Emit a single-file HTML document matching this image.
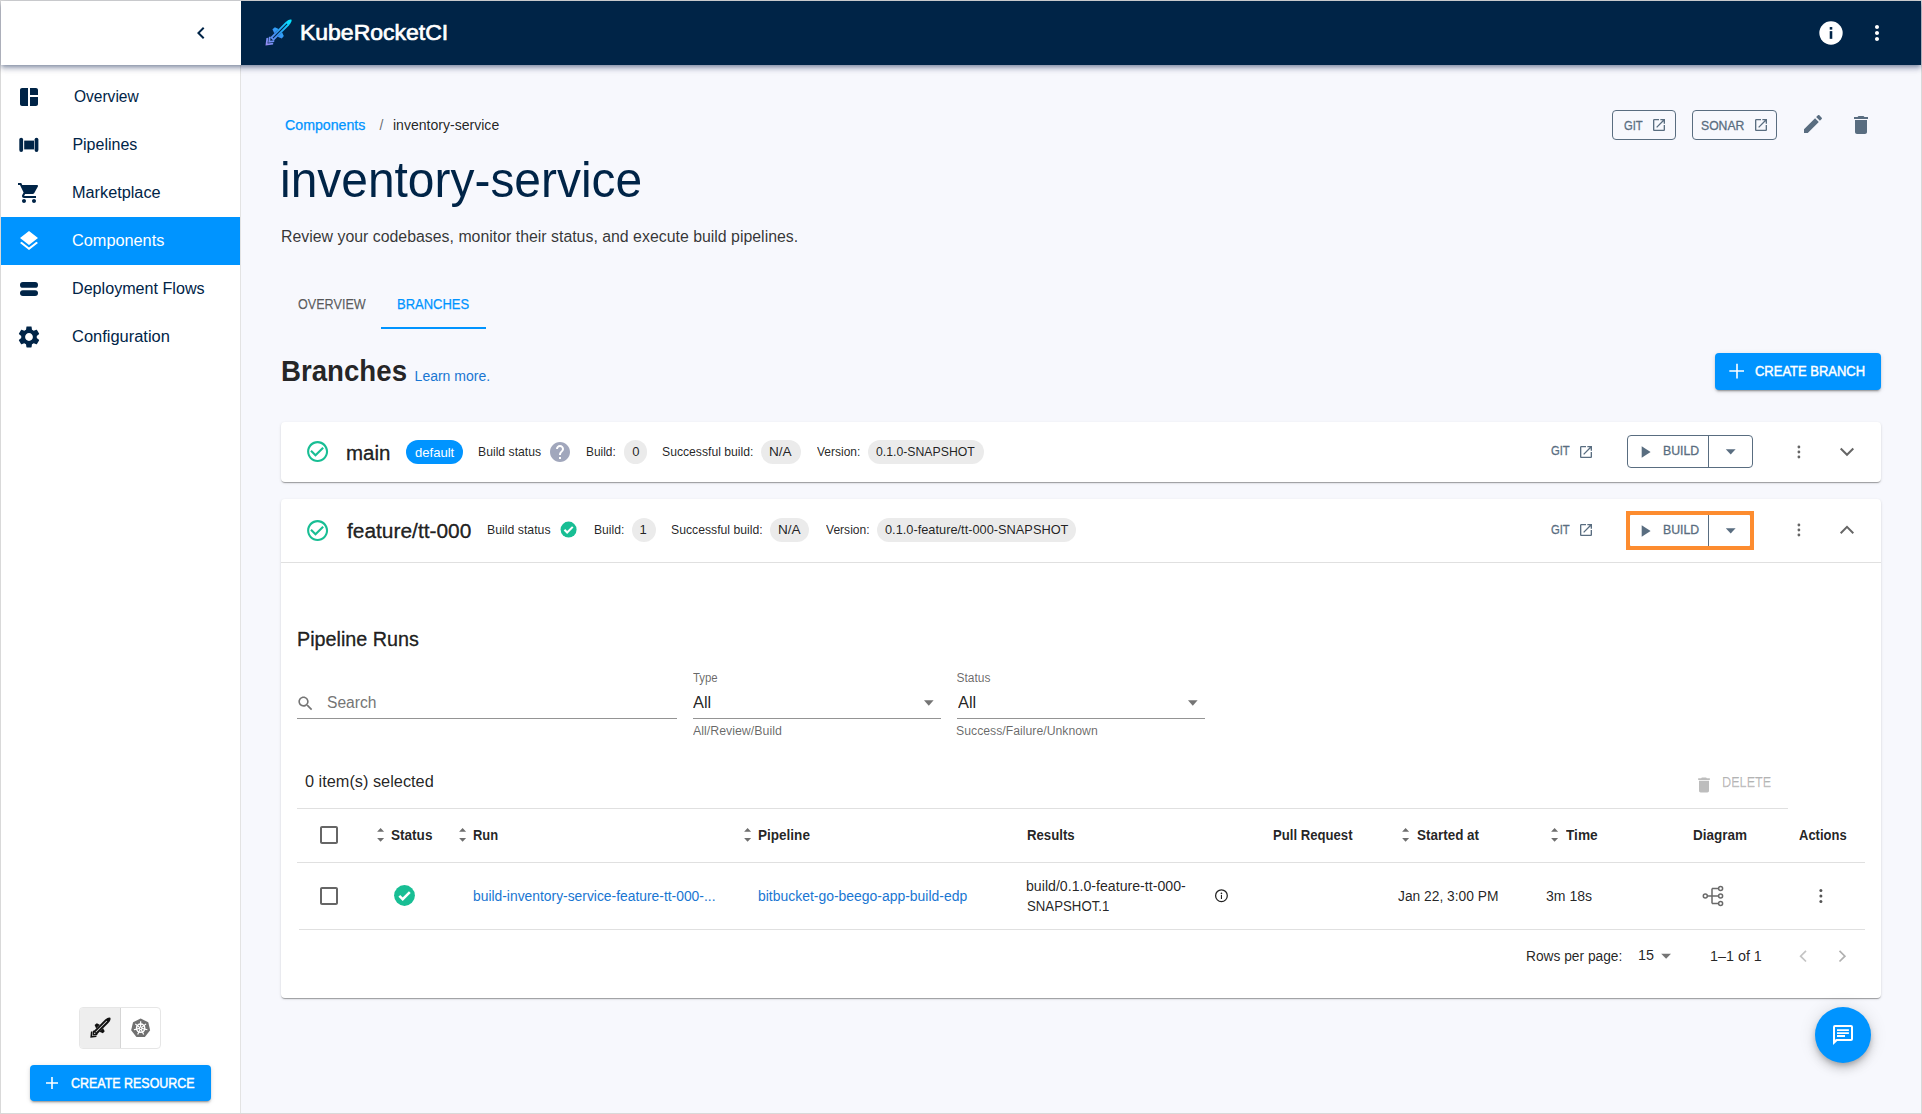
<!DOCTYPE html>
<html><head><meta charset="utf-8"><style>
html,body{margin:0;padding:0}
body{width:1922px;height:1114px;overflow:hidden;background:#d9d9d9;position:relative;font-family:"Liberation Sans",sans-serif}
.bx{position:absolute;box-sizing:content-box}
.a{position:absolute;overflow:visible}
.t{position:absolute;line-height:1;white-space:nowrap;z-index:3;transform-origin:0 0}
</style></head><body>
<div class="bx" style="left:1px;top:1px;width:1920px;height:1112px;background:#f7f8fd"></div>
<div class="bx" style="left:1px;top:1px;width:239px;height:1112px;background:#fff;border-right:1px solid #e3e3e3"></div>
<div class="bx" style="left:1px;top:217px;width:239px;height:48px;background:#0094ff"></div>
<div class="bx" style="left:1px;top:1px;width:1920px;height:64px;background:#fff;box-shadow:0 2px 4px -1px rgba(0,25,70,.32),0 4px 5px 0 rgba(0,25,70,.2),0 1px 10px 0 rgba(0,25,70,.14);z-index:2"></div>
<div class="bx" style="left:241px;top:1px;width:1680px;height:64px;background:#002447;z-index:2"></div>
<svg class="a" style="z-index:3;left:189px;top:21px" width="24" height="24" viewBox="0 0 24 24"><path fill="#002447" d="M15.41 7.41L14 6l-6 6 6 6 1.41-1.41L10.83 12z"/></svg>
<svg class="a" style="left:17px;top:85px" width="24" height="24" viewBox="0 0 24 24"><path fill="#002447" d="M11 21H5c-1.1 0-2-.9-2-2V5c0-1.1.9-2 2-2h6v18zm2 0h6c1.1 0 2-.9 2-2v-7h-8v9zm8-11V5c0-1.1-.9-2-2-2h-6v7h8z"/></svg>
<svg class="a" style="left:17px;top:133px" width="24" height="24" viewBox="0 0 24 24"><rect x="2.3" y="4.7" width="3.8" height="14.2" rx="1.9" fill="#002447"/><rect x="7.2" y="7.6" width="9.8" height="8.8" fill="#002447"/><rect x="17.6" y="4.7" width="3.8" height="14.2" rx="1.9" fill="#002447"/></svg>
<svg class="a" style="left:17px;top:181px" width="24" height="24" viewBox="0 0 24 24"><path fill="#002447" d="M7 18c-1.1 0-1.99.9-1.99 2S5.9 22 7 22s2-.9 2-2-.9-2-2-2zM1 2v2h2l3.6 7.59-1.35 2.45c-.16.28-.25.61-.25.96 0 1.1.9 2 2 2h12v-2H7.42c-.14 0-.25-.11-.25-.25l.03-.12.9-1.63h7.45c.75 0 1.41-.41 1.75-1.03l3.58-6.49c.08-.14.12-.31.12-.48 0-.55-.45-1-1-1H5.21l-.94-2H1zm16 16c-1.1 0-1.99.9-1.99 2s.89 2 1.99 2 2-.9 2-2-.9-2-2-2z"/></svg>
<svg class="a" style="left:17px;top:229px" width="24" height="24" viewBox="0 0 24 24"><path fill="#fff" d="M11.99 18.54l-7.37-5.73L3 14.07l9 7 9-7-1.63-1.27-7.38 5.74zM12 16l7.36-5.73L21 9l-9-7-9 7 1.63 1.27L12 16z"/></svg>
<svg class="a" style="left:17px;top:277px" width="24" height="24" viewBox="0 0 24 24"><rect x="3" y="5" width="18" height="5.8" rx="2.9" fill="#002447"/><rect x="3" y="13.2" width="18" height="5.8" rx="2.9" fill="#002447"/></svg>
<svg class="a" style="left:16px;top:324px" width="26" height="26" viewBox="0 0 24 24"><path fill="#002447" d="M19.14 12.94c.04-.3.06-.61.06-.94 0-.32-.02-.64-.07-.94l2.03-1.58c.18-.14.23-.41.12-.61l-1.92-3.32c-.12-.22-.37-.29-.59-.22l-2.39.96c-.5-.38-1.03-.7-1.62-.94l-.36-2.54c-.04-.24-.24-.41-.48-.41h-3.84c-.24 0-.43.17-.47.41l-.36 2.54c-.59.24-1.13.57-1.62.94l-2.39-.96c-.22-.08-.47 0-.59.22L2.74 8.87c-.12.21-.08.47.12.61l2.03 1.58c-.05.3-.09.63-.09.94s.02.64.07.94l-2.03 1.58c-.18.14-.23.41-.12.61l1.92 3.32c.12.22.37.29.59.22l2.39-.96c.5.38 1.03.7 1.62.94l.36 2.54c.05.24.24.41.48.41h3.84c.24 0 .44-.17.47-.41l.36-2.54c.59-.24 1.13-.56 1.62-.94l2.39.96c.22.08.47 0 .59-.22l1.92-3.32c.12-.22.07-.47-.12-.61l-2.01-1.58zM12 15.6c-1.98 0-3.6-1.62-3.6-3.6s1.62-3.6 3.6-3.6 3.6 1.62 3.6 3.6-1.62 3.6-3.6 3.6z"/></svg>
<svg class="a" style="left:264px;top:19px;z-index:3" width="28" height="28" viewBox="0 0 28 28"><defs><linearGradient id="lg" gradientUnits="userSpaceOnUse" x1="0" y1="0" x2="36" y2="0"><stop offset="0" stop-color="#a08cf2"/><stop offset="0.45" stop-color="#3a93f6"/><stop offset="1" stop-color="#00e8ff"/></linearGradient></defs><g transform="translate(1.5,26.5) rotate(-45)" fill="url(#lg)"><path d="M9,-2.4 L31,-2.4 Q36,-2 36.6,0 Q36,2 31,2.4 L9,2.4 Z"/><path d="M14.8,-2.4 L21,-2.4 L19.6,-6.3 L16.4,-6.6 Z"/><path d="M14.8,2.4 L21,2.4 L19.6,6.3 L16.4,6.6 Z"/><path d="M0,0 L6,-4.7 L7.5,-3.5 L2.9,0 L7.5,3.5 L6,4.7Z"/><path d="M3.9,0 L8.6,-3.7 L9.9,-2.6 L6.7,0 L9.9,2.6 L8.6,3.7Z"/><rect x="10.5" y="-0.55" width="20" height="1.1" fill="#002447"/></g></svg>
<svg class="a" style="left:1817px;top:19px;z-index:3" width="28" height="28" viewBox="0 0 24 24"><circle cx="12" cy="12" r="10" fill="#fff"/><rect x="10.9" y="10.4" width="2.2" height="6.6" fill="#002447"/><rect x="10.9" y="6.9" width="2.2" height="2.2" fill="#002447"/></svg>
<svg class="a" style="left:1865px;top:21px;z-index:3" width="24" height="24" viewBox="0 0 24 24"><path fill="#fff" d="M12 8c1.1 0 2-.9 2-2s-.9-2-2-2-2 .9-2 2 .9 2 2 2zm0 2c-1.1 0-2 .9-2 2s.9 2 2 2 2-.9 2-2-.9-2-2-2zm0 6c-1.1 0-2 .9-2 2s.9 2 2 2 2-.9 2-2-.9-2-2-2z"/></svg>
<div class="bx" style="left:1612px;top:110px;width:62px;height:28px;border:1px solid #596d80;border-radius:4px"></div>
<svg class="a" style="left:1651px;top:117px" width="16" height="16" viewBox="0 0 24 24"><path fill="#596d80" d="M19 19H5V5h7V3H5c-1.11 0-2 .9-2 2v14c0 1.1.89 2 2 2h14c1.1 0 2-.9 2-2v-7h-2v7zM14 3v2h3.59l-9.83 9.83 1.41 1.41L19 6.41V10h2V3h-7z"/></svg>
<div class="bx" style="left:1692px;top:110px;width:83px;height:28px;border:1px solid #596d80;border-radius:4px"></div>
<svg class="a" style="left:1753.3px;top:117px" width="16" height="16" viewBox="0 0 24 24"><path fill="#596d80" d="M19 19H5V5h7V3H5c-1.11 0-2 .9-2 2v14c0 1.1.89 2 2 2h14c1.1 0 2-.9 2-2v-7h-2v7zM14 3v2h3.59l-9.83 9.83 1.41 1.41L19 6.41V10h2V3h-7z"/></svg>
<svg class="a" style="left:1801px;top:112px" width="24" height="24" viewBox="0 0 24 24"><path fill="#596d80" d="M3 17.25V21h3.75L17.81 9.94l-3.75-3.75L3 17.25zM20.71 7.04c.39-.39.39-1.02 0-1.41l-2.34-2.34c-.39-.39-1.02-.39-1.41 0l-1.83 1.83 3.75 3.75 1.83-1.83z"/></svg>
<svg class="a" style="left:1849px;top:113px" width="24" height="24" viewBox="0 0 24 24"><path fill="#596d80" d="M6 19c0 1.1.9 2 2 2h8c1.1 0 2-.9 2-2V7H6v12zM19 4h-3.5l-1-1h-5l-1 1H5v2h14V4z"/></svg>
<div class="bx" style="left:381px;top:327px;width:105px;height:2px;background:#0094ff"></div>
<div class="bx" style="left:1715px;top:353px;width:166px;height:37px;background:#0094ff;border-radius:4px;box-shadow:0 3px 1px -2px rgba(0,0,0,.2),0 2px 2px 0 rgba(0,0,0,.14),0 1px 5px 0 rgba(0,0,0,.12)"></div>
<svg class="a" style="left:1729px;top:363px" width="16" height="16" viewBox="0 0 16 16"><path d="M8 0.7V15.5M0.3 8H15" stroke="#fff" stroke-width="1.6"/></svg>
<div class="bx" style="left:281px;top:422px;width:1600px;height:60px;background:#fff;border-radius:4px;box-shadow:0 2px 1px -1px rgba(0,0,0,.2),0 1px 1px 0 rgba(0,0,0,.14),0 1px 3px 0 rgba(0,0,0,.12)"></div>
<svg class="a" style="left:304.9px;top:438.9px" width="25.2" height="25.2" viewBox="0 0 24 24"><path fill="#18be94" d="M16.59 7.58L10 14.17l-3.59-3.58L5 12l5 5 8-8zM12 2C6.48 2 2 6.48 2 12s4.48 10 10 10 10-4.48 10-10S17.52 2 12 2zm0 18c-4.42 0-8-3.58-8-8s3.58-8 8-8 8 3.58 8 8-3.58 8-8 8z"/></svg>
<div class="bx" style="left:406px;top:440px;width:57px;height:24px;border-radius:12px;background:#0094ff"></div>
<svg class="a" style="left:548px;top:439.7px" width="24" height="24" viewBox="0 0 24 24"><path fill="#a1a7bc" d="M12 2C6.48 2 2 6.48 2 12s4.48 10 10 10 10-4.48 10-10S17.52 2 12 2zm1 17h-2v-2h2v2zm2.07-7.75l-.9.92C13.45 12.9 13 13.5 13 15h-2v-.5c0-1.1.45-2.1 1.17-2.83l1.24-1.26c.37-.36.59-.86.59-1.41 0-1.1-.9-2-2-2s-2 .9-2 2H8c0-2.21 1.79-4 4-4s4 1.79 4 4c0 .88-.36 1.68-.93 2.25z"/></svg>
<div class="bx" style="left:624px;top:440px;width:23px;height:24px;border-radius:12px;background:#ebebeb"></div>
<div class="bx" style="left:761px;top:440px;width:40px;height:24px;border-radius:12px;background:#ebebeb"></div>
<div class="bx" style="left:868px;top:440px;width:116px;height:24px;border-radius:12px;background:#ebebeb"></div>
<svg class="a" style="left:1578px;top:444.0px" width="16" height="16" viewBox="0 0 24 24"><path fill="#596d80" d="M19 19H5V5h7V3H5c-1.11 0-2 .9-2 2v14c0 1.1.89 2 2 2h14c1.1 0 2-.9 2-2v-7h-2v7zM14 3v2h3.59l-9.83 9.83 1.41 1.41L19 6.41V10h2V3h-7z"/></svg>
<div class="bx" style="left:1627px;top:435.0px;width:124px;height:31px;border:1px solid #596d80;border-radius:4px"></div>
<div class="bx" style="left:1708px;top:435.0px;width:1px;height:33px;background:#596d80"></div>
<svg class="a" style="left:1640px;top:444.5px" width="12" height="14" viewBox="0 0 12 14"><path d="M1.7 1.3L10.6 7 1.7 12.7z" fill="#596d80"/></svg>
<svg class="a" style="left:1724px;top:447.5px" width="13" height="8" viewBox="0 0 13 8"><path d="M1.8 1.3h9.8L6.7 6.6z" fill="#596d80"/></svg>
<svg class="a" style="left:1795px;top:443.5px" width="8" height="16" viewBox="0 0 8 16"><circle cx="3.9" cy="3" r="1.4" fill="#666"/><circle cx="3.9" cy="8" r="1.4" fill="#666"/><circle cx="3.9" cy="13" r="1.4" fill="#666"/></svg>
<svg class="a" style="left:1838px;top:445.5px" width="18" height="12" viewBox="0 0 18 12"><path d="M2.7 2.5L9 8.8l6.3-6.3" fill="none" stroke="#666" stroke-width="2"/></svg>
<div class="bx" style="left:281px;top:499px;width:1600px;height:499px;background:#fff;border-radius:4px;box-shadow:0 2px 1px -1px rgba(0,0,0,.2),0 1px 1px 0 rgba(0,0,0,.14),0 1px 3px 0 rgba(0,0,0,.12)"></div>
<div class="bx" style="left:281px;top:562px;width:1600px;height:1px;background:#e0e0e0"></div>
<svg class="a" style="left:304.9px;top:517.8px" width="25.2" height="25.2" viewBox="0 0 24 24"><path fill="#18be94" d="M16.59 7.58L10 14.17l-3.59-3.58L5 12l5 5 8-8zM12 2C6.48 2 2 6.48 2 12s4.48 10 10 10 10-4.48 10-10S17.52 2 12 2zm0 18c-4.42 0-8-3.58-8-8s3.58-8 8-8 8 3.58 8 8-3.58 8-8 8z"/></svg>
<svg class="a" style="left:559.4px;top:520.4px" width="19.2" height="19.2" viewBox="0 0 24 24"><circle cx="12" cy="12" r="10" fill="#18be94"/><path d="M6.8 12.2l3.4 3.4 7-7" fill="none" stroke="#fff" stroke-width="2.6"/></svg>
<div class="bx" style="left:632px;top:518px;width:24px;height:24px;border-radius:12px;background:#ebebeb"></div>
<div class="bx" style="left:770px;top:518px;width:39px;height:24px;border-radius:12px;background:#ebebeb"></div>
<div class="bx" style="left:877px;top:518px;width:199px;height:24px;border-radius:12px;background:#ebebeb"></div>
<svg class="a" style="left:1578px;top:522.1px" width="16" height="16" viewBox="0 0 24 24"><path fill="#596d80" d="M19 19H5V5h7V3H5c-1.11 0-2 .9-2 2v14c0 1.1.89 2 2 2h14c1.1 0 2-.9 2-2v-7h-2v7zM14 3v2h3.59l-9.83 9.83 1.41 1.41L19 6.41V10h2V3h-7z"/></svg>
<div class="bx" style="left:1627px;top:514.0px;width:124px;height:31px;border:1px solid #596d80;border-radius:4px"></div>
<div class="bx" style="left:1708px;top:514.0px;width:1px;height:33px;background:#596d80"></div>
<svg class="a" style="left:1640px;top:523.5px" width="12" height="14" viewBox="0 0 12 14"><path d="M1.7 1.3L10.6 7 1.7 12.7z" fill="#596d80"/></svg>
<svg class="a" style="left:1724px;top:526.5px" width="13" height="8" viewBox="0 0 13 8"><path d="M1.8 1.3h9.8L6.7 6.6z" fill="#596d80"/></svg>
<div class="bx" style="left:1626px;top:511.0px;width:120px;height:31px;border:4px solid #fd8c2f;z-index:4"></div>
<svg class="a" style="left:1795px;top:521.5px" width="8" height="16" viewBox="0 0 8 16"><circle cx="3.9" cy="3" r="1.4" fill="#666"/><circle cx="3.9" cy="8" r="1.4" fill="#666"/><circle cx="3.9" cy="13" r="1.4" fill="#666"/></svg>
<svg class="a" style="left:1838px;top:522.7px" width="18" height="12" viewBox="0 0 18 12"><path d="M2.7 10.2L9 3.9l6.3 6.3" fill="none" stroke="#666" stroke-width="2"/></svg>
<svg class="a" style="left:296.3px;top:693.6px" width="19" height="19" viewBox="0 0 24 24"><path fill="#757575" d="M15.5 14h-.79l-.28-.27C15.41 12.59 16 11.11 16 9.5 16 5.91 13.09 3 9.5 3S3 5.91 3 9.5 5.91 16 9.5 16c1.61 0 3.09-.59 4.23-1.57l.27.28v.79l5 4.99L20.49 19l-4.99-5zm-6 0C7.01 14 5 11.99 5 9.5S7.01 5 9.5 5 14 7.01 14 9.5 11.99 14 9.5 14z"/></svg>
<div class="bx" style="left:297px;top:718px;width:380px;height:1px;background:#949494"></div>
<div class="bx" style="left:693px;top:718px;width:248px;height:1px;background:#949494"></div>
<div class="bx" style="left:957px;top:718px;width:248px;height:1px;background:#949494"></div>
<svg class="a" style="left:923.4px;top:699px" width="12" height="8" viewBox="0 0 12 8"><path d="M1 1.3h9.6L5.8 6.8z" fill="#757575"/></svg>
<svg class="a" style="left:1187.3px;top:699px" width="12" height="8" viewBox="0 0 12 8"><path d="M1 1.3h9.6L5.8 6.8z" fill="#757575"/></svg>
<svg class="a" style="left:1694px;top:775px" width="20" height="20" viewBox="0 0 24 24"><path fill="rgba(0,0,0,0.26)" d="M6 19c0 1.1.9 2 2 2h8c1.1 0 2-.9 2-2V7H6v12zM19 4h-3.5l-1-1h-5l-1 1H5v2h14V4z"/></svg>
<div class="bx" style="left:297px;top:808px;width:1491px;height:1px;background:#e0e0e0"></div>
<div class="bx" style="left:297px;top:862px;width:1568px;height:1px;background:#e0e0e0"></div>
<div class="bx" style="left:299px;top:929px;width:1566px;height:1px;background:#e0e0e0"></div>
<svg class="a" style="left:317px;top:823px" width="24" height="24" viewBox="0 0 24 24"><path fill="rgba(0,0,0,0.6)" d="M19 5v14H5V5h14m0-2H5c-1.1 0-2 .9-2 2v14c0 1.1.9 2 2 2h14c1.1 0 2-.9 2-2V5c0-1.1-.9-2-2-2z"/></svg>
<svg class="a" style="left:317px;top:884px" width="24" height="24" viewBox="0 0 24 24"><path fill="rgba(0,0,0,0.6)" d="M19 5v14H5V5h14m0-2H5c-1.1 0-2 .9-2 2v14c0 1.1.9 2 2 2h14c1.1 0 2-.9 2-2V5c0-1.1-.9-2-2-2z"/></svg>
<svg class="a" style="left:376.2px;top:827px" width="10" height="16" viewBox="0 0 10 16"><path d="M1.1 4.8L4.6 1.1 8.1 4.8z M1.1 11.1L4.6 14.8 8.1 11.1z" fill="#6f6f6f"/></svg>
<svg class="a" style="left:457.7px;top:827px" width="10" height="16" viewBox="0 0 10 16"><path d="M1.1 4.8L4.6 1.1 8.1 4.8z M1.1 11.1L4.6 14.8 8.1 11.1z" fill="#6f6f6f"/></svg>
<svg class="a" style="left:742.5px;top:827px" width="10" height="16" viewBox="0 0 10 16"><path d="M1.1 4.8L4.6 1.1 8.1 4.8z M1.1 11.1L4.6 14.8 8.1 11.1z" fill="#6f6f6f"/></svg>
<svg class="a" style="left:1401px;top:827px" width="10" height="16" viewBox="0 0 10 16"><path d="M1.1 4.8L4.6 1.1 8.1 4.8z M1.1 11.1L4.6 14.8 8.1 11.1z" fill="#6f6f6f"/></svg>
<svg class="a" style="left:1549.9px;top:827px" width="10" height="16" viewBox="0 0 10 16"><path d="M1.1 4.8L4.6 1.1 8.1 4.8z M1.1 11.1L4.6 14.8 8.1 11.1z" fill="#6f6f6f"/></svg>
<svg class="a" style="left:392px;top:883px" width="25" height="25" viewBox="0 0 24 24"><circle cx="12" cy="12" r="10" fill="#18be94"/><path d="M7 12.3l3.3 3.3 6.8-6.8" fill="none" stroke="#fff" stroke-width="2.4"/></svg>
<svg class="a" style="left:1213px;top:887px" width="17" height="17" viewBox="0 0 17 17"><circle cx="8.45" cy="8.7" r="5.85" fill="none" stroke="#222" stroke-width="1.25"/><path d="M8.45 8.1v4" stroke="#222" stroke-width="1.1"/><circle cx="8.45" cy="6.4" r="0.8" fill="#222"/></svg>
<svg class="a" style="left:1701px;top:884px" width="24" height="24" viewBox="0 0 24 24"><g fill="none" stroke="#6a6a6a" stroke-width="1.5"><circle cx="4.3" cy="12" r="2"/><circle cx="19.6" cy="4.6" r="2"/><circle cx="19.6" cy="12" r="2"/><circle cx="19.6" cy="19.4" r="2"/><path d="M6.3 12h11.3M11 4.6h6.6M11 19.4h6.6M11 4.6v14.8"/></g></svg>
<svg class="a" style="left:1817px;top:888px" width="8" height="16" viewBox="0 0 8 16"><circle cx="3.9" cy="2.6" r="1.5" fill="#555"/><circle cx="3.9" cy="8" r="1.5" fill="#555"/><circle cx="3.9" cy="13.4" r="1.5" fill="#555"/></svg>
<svg class="a" style="left:1660px;top:952px" width="12" height="8" viewBox="0 0 12 8"><path d="M1.2 1.7h9.8L6.1 6.7z" fill="#757575"/></svg>
<svg class="a" style="left:1796px;top:949px" width="14" height="14" viewBox="0 0 14 14"><path d="M10 1.8L4.6 7.2 10 12.5" fill="none" stroke="#c4c4c4" stroke-width="1.7"/></svg>
<svg class="a" style="left:1836px;top:949px" width="14" height="14" viewBox="0 0 14 14"><path d="M3.5 1.8L8.9 7.2 3.5 12.5" fill="none" stroke="#b0b0b0" stroke-width="1.7"/></svg>
<div class="bx" style="left:79px;top:1007px;width:80px;height:40px;border:1px solid #e6e6e6;border-radius:4px"></div>
<div class="bx" style="left:80px;top:1008px;width:40px;height:40px;background:#eeeeee;border-radius:3px 0 0 3px;border-right:1px solid #d5d5d5"></div>
<svg class="a" style="left:89px;top:1017px" width="22" height="22" viewBox="0 0 22 22"><g transform="translate(1.3,20.7) rotate(-45) scale(0.77)" fill="#111"><path d="M8.5,-3.1 L30.5,-3.1 Q36,-2.6 36.8,0 Q36,2.6 30.5,3.1 L8.5,3.1 Z"/><path d="M13.8,-3.1 L20.5,-3.1 L19.2,-7.2 L15.6,-7.6 Z"/><path d="M13.8,3.1 L20.5,3.1 L19.2,7.2 L15.6,7.6 Z"/><path d="M0,0 L6.2,-5 L7.8,-3.7 L3.1,0 L7.8,3.7 L6.2,5Z"/><path d="M4.1,0 L8.9,-3.9 L10.3,-2.8 L7,0 L10.3,2.8 L8.9,3.9Z"/><rect x="10" y="-0.5" width="20.5" height="1" fill="#eee"/></g></svg>
<svg class="a" style="left:130px;top:1017px" width="22" height="22" viewBox="0 0 22 22"><polygon points="10.65,1.47 18.26,5.13 20.14,13.37 14.87,19.97 6.43,19.97 1.16,13.37 3.04,5.13" fill="#707070"/><g stroke="#fff" fill="none"><circle cx="10.65" cy="11.2" r="4.1" stroke-width="1.5"/><path d="M10.65 11.20L10.65 4.30M10.65 11.20L16.04 6.90M10.65 11.20L17.38 12.74M10.65 11.20L13.64 17.42M10.65 11.20L7.66 17.42M10.65 11.20L3.92 12.74M10.65 11.20L5.26 6.90" stroke-width="1.2"/></g><circle cx="10.65" cy="11.2" r="0.7" fill="#707070"/></svg>
<div class="bx" style="left:30px;top:1065px;width:181px;height:36px;background:#0094ff;border-radius:4px;box-shadow:0 3px 1px -2px rgba(0,0,0,.2),0 2px 2px 0 rgba(0,0,0,.14),0 1px 5px 0 rgba(0,0,0,.12)"></div>
<svg class="a" style="left:45px;top:1076px" width="14" height="14" viewBox="0 0 14 14"><path d="M7 1V13M1 7H13" stroke="#fff" stroke-width="1.6"/></svg>
<div class="bx" style="left:1815px;top:1007px;width:56px;height:56px;border-radius:50%;background:#0094ff;box-shadow:0 3px 5px -1px rgba(0,0,0,.2),0 6px 10px 0 rgba(0,0,0,.14),0 1px 18px 0 rgba(0,0,0,.12)"></div>
<svg class="a" style="left:1828px;top:1020px" width="30" height="30" viewBox="0 0 30 30"><path fill="#fff" fill-rule="evenodd" d="M7,5H23Q25,5 25,7V19Q25,21 23,21H9.2L5,24.9V7Q5,5 7,5ZM7,7V19.8L8.4,19H23V7Z"/><path fill="#fff" d="M9,9.2h11.9v1.8H9zM9,12.2h11.9v1.8H9zM9,15.1h8v1.8H9z"/></svg>
<div class="t" style="left:73.63px;top:88.90px;font-size:16px;font-weight:400;color:#002447;transform:scaleX(0.9697);">Overview</div>
<div class="t" style="left:72.40px;top:136.90px;font-size:16px;font-weight:400;color:#002447;transform:scaleX(1.0000);">Pipelines</div>
<div class="t" style="left:72.38px;top:184.90px;font-size:16px;font-weight:400;color:#002447;transform:scaleX(1.0163);">Marketplace</div>
<div class="t" style="left:71.98px;top:232.90px;font-size:16px;font-weight:400;color:#fff;transform:scaleX(1.0180);">Components</div>
<div class="t" style="left:72.19px;top:280.90px;font-size:16px;font-weight:400;color:#002447;transform:scaleX(1.0077);">Deployment Flows</div>
<div class="t" style="left:71.97px;top:328.90px;font-size:16px;font-weight:400;color:#002447;transform:scaleX(1.0280);">Configuration</div>
<div class="t" style="left:299.78px;top:21.88px;font-size:22.5px;font-weight:400;color:#fff;transform:scaleX(1.0210);-webkit-text-stroke:0.7px #fff;">KubeRocketCI</div>
<div class="t" style="left:285.49px;top:117.70px;font-size:14px;font-weight:400;color:#0094ff;transform:scaleX(1.0128);-webkit-text-stroke:0.25px #0094ff;">Components</div>
<div class="t" style="left:379.40px;top:117.70px;font-size:14px;font-weight:400;color:rgba(0,0,0,0.6);transform:scaleX(1.0000);">/</div>
<div class="t" style="left:393.40px;top:117.70px;font-size:14px;font-weight:400;color:rgba(0,0,0,0.87);transform:scaleX(1.0038);">inventory-service</div>
<div class="t" style="left:280.02px;top:155.00px;font-size:50px;font-weight:400;color:#002447;transform:scaleX(0.9584);">inventory-service</div>
<div class="t" style="left:281.01px;top:229.10px;font-size:16px;font-weight:400;color:rgba(0,0,0,0.8);transform:scaleX(0.9923);">Review your codebases, monitor their status, and execute build pipelines.</div>
<div class="t" style="left:297.50px;top:297.10px;font-size:14px;font-weight:400;color:rgba(0,0,0,0.6);transform:scaleX(0.9000);-webkit-text-stroke:0.25px rgba(0,0,0,0.6);">OVERVIEW</div>
<div class="t" style="left:397.07px;top:297.10px;font-size:14px;font-weight:400;color:#0094ff;transform:scaleX(0.9273);-webkit-text-stroke:0.25px #0094ff;">BRANCHES</div>
<div class="t" style="left:280.66px;top:355.50px;font-size:30px;font-weight:700;color:rgba(0,0,0,0.87);transform:scaleX(0.9216);">Branches</div>
<div class="t" style="left:414.60px;top:369.00px;font-size:14px;font-weight:400;color:#1976d2;transform:scaleX(1.0000);">Learn more.</div>
<div class="t" style="left:1755.00px;top:364.10px;font-size:14px;font-weight:400;color:#fff;transform:scaleX(0.9271);-webkit-text-stroke:0.45px #fff;">CREATE BRANCH</div>
<div class="t" style="left:345.58px;top:443.00px;font-size:20px;font-weight:400;color:rgba(0,0,0,0.87);transform:scaleX(1.0238);-webkit-text-stroke:0.35px rgba(0,0,0,0.87);">main</div>
<div class="t" style="left:415.00px;top:445.75px;font-size:13px;font-weight:400;color:#fff;transform:scaleX(1.0051);">default</div>
<div class="t" style="left:478.26px;top:444.65px;font-size:13px;font-weight:400;color:rgba(0,0,0,0.87);transform:scaleX(0.9394);">Build status</div>
<div class="t" style="left:585.68px;top:444.65px;font-size:13px;font-weight:400;color:rgba(0,0,0,0.87);transform:scaleX(0.9161);">Build:</div>
<div class="t" style="left:632.20px;top:444.65px;font-size:13px;font-weight:400;color:rgba(0,0,0,0.87);transform:scaleX(1.0000);">0</div>
<div class="t" style="left:662.06px;top:444.65px;font-size:13px;font-weight:400;color:rgba(0,0,0,0.87);transform:scaleX(0.9375);">Successful build:</div>
<div class="t" style="left:768.95px;top:444.65px;font-size:13px;font-weight:400;color:rgba(0,0,0,0.87);transform:scaleX(1.0476);">N/A</div>
<div class="t" style="left:817.00px;top:444.65px;font-size:13px;font-weight:400;color:rgba(0,0,0,0.87);transform:scaleX(0.9217);">Version:</div>
<div class="t" style="left:876.20px;top:444.65px;font-size:13px;font-weight:400;color:rgba(0,0,0,0.87);transform:scaleX(0.9429);">0.1.0-SNAPSHOT</div>
<div class="t" style="left:1550.60px;top:444.35px;font-size:13px;font-weight:400;color:#596d80;transform:scaleX(0.8636);-webkit-text-stroke:0.3px #596d80;">GIT</div>
<div class="t" style="left:1662.55px;top:444.35px;font-size:13px;font-weight:400;color:#596d80;transform:scaleX(0.9459);-webkit-text-stroke:0.3px #596d80;">BUILD</div>
<div class="t" style="left:346.50px;top:520.50px;font-size:20px;font-weight:400;color:rgba(0,0,0,0.87);transform:scaleX(1.0454);-webkit-text-stroke:0.35px rgba(0,0,0,0.87);">feature/tt-000</div>
<div class="t" style="left:487.05px;top:522.95px;font-size:13px;font-weight:400;color:rgba(0,0,0,0.87);transform:scaleX(0.9455);">Build status</div>
<div class="t" style="left:594.37px;top:522.95px;font-size:13px;font-weight:400;color:rgba(0,0,0,0.87);transform:scaleX(0.9323);">Build:</div>
<div class="t" style="left:639.50px;top:522.95px;font-size:13px;font-weight:400;color:rgba(0,0,0,0.87);transform:scaleX(1.0000);">1</div>
<div class="t" style="left:671.06px;top:522.95px;font-size:13px;font-weight:400;color:rgba(0,0,0,0.87);transform:scaleX(0.9396);">Successful build:</div>
<div class="t" style="left:777.95px;top:522.95px;font-size:13px;font-weight:400;color:rgba(0,0,0,0.87);transform:scaleX(1.0476);">N/A</div>
<div class="t" style="left:826.00px;top:522.95px;font-size:13px;font-weight:400;color:rgba(0,0,0,0.87);transform:scaleX(0.9283);">Version:</div>
<div class="t" style="left:885.00px;top:522.95px;font-size:13px;font-weight:400;color:rgba(0,0,0,0.87);transform:scaleX(0.9839);">0.1.0-feature/tt-000-SNAPSHOT</div>
<div class="t" style="left:1550.60px;top:522.95px;font-size:13px;font-weight:400;color:#596d80;transform:scaleX(0.8636);-webkit-text-stroke:0.3px #596d80;">GIT</div>
<div class="t" style="left:1662.80px;top:522.95px;font-size:13px;font-weight:400;color:#596d80;transform:scaleX(0.9459);-webkit-text-stroke:0.3px #596d80;">BUILD</div>
<div class="t" style="left:296.71px;top:629.00px;font-size:20px;font-weight:400;color:rgba(0,0,0,0.87);transform:scaleX(0.9877);-webkit-text-stroke:0.35px rgba(0,0,0,0.87);">Pipeline Runs</div>
<div class="t" style="left:326.52px;top:694.50px;font-size:16px;font-weight:400;color:#757575;transform:scaleX(0.9755);">Search</div>
<div class="t" style="left:693.30px;top:671.90px;font-size:12px;font-weight:400;color:rgba(0,0,0,0.6);transform:scaleX(0.9500);">Type</div>
<div class="t" style="left:693.30px;top:694.70px;font-size:16px;font-weight:400;color:rgba(0,0,0,0.87);transform:scaleX(1.0235);">All</div>
<div class="t" style="left:693.30px;top:725.40px;font-size:12px;font-weight:400;color:rgba(0,0,0,0.6);transform:scaleX(1.0318);">All/Review/Build</div>
<div class="t" style="left:956.50px;top:671.90px;font-size:12px;font-weight:400;color:rgba(0,0,0,0.6);transform:scaleX(1.0000);">Status</div>
<div class="t" style="left:957.50px;top:694.70px;font-size:16px;font-weight:400;color:rgba(0,0,0,0.87);transform:scaleX(1.0235);">All</div>
<div class="t" style="left:956.48px;top:725.40px;font-size:12px;font-weight:400;color:rgba(0,0,0,0.6);transform:scaleX(1.0219);">Success/Failure/Unknown</div>
<div class="t" style="left:304.58px;top:774.30px;font-size:16px;font-weight:400;color:rgba(0,0,0,0.87);transform:scaleX(1.0194);">0 item(s) selected</div>
<div class="t" style="left:1722.29px;top:775.10px;font-size:14px;font-weight:400;color:rgba(0,0,0,0.26);transform:scaleX(0.9057);-webkit-text-stroke:0.25px rgba(0,0,0,0.26);">DELETE</div>
<div class="t" style="left:391.03px;top:828.20px;font-size:14px;font-weight:700;color:rgba(0,0,0,0.87);transform:scaleX(0.9683);">Status</div>
<div class="t" style="left:473.48px;top:828.20px;font-size:14px;font-weight:700;color:rgba(0,0,0,0.87);transform:scaleX(0.9231);">Run</div>
<div class="t" style="left:758.03px;top:828.20px;font-size:14px;font-weight:700;color:rgba(0,0,0,0.87);transform:scaleX(0.9673);">Pipeline</div>
<div class="t" style="left:1026.56px;top:828.20px;font-size:14px;font-weight:700;color:rgba(0,0,0,0.87);transform:scaleX(0.9429);">Results</div>
<div class="t" style="left:1272.76px;top:828.20px;font-size:14px;font-weight:700;color:rgba(0,0,0,0.87);transform:scaleX(0.9381);">Pull Request</div>
<div class="t" style="left:1417.04px;top:828.20px;font-size:14px;font-weight:700;color:rgba(0,0,0,0.87);transform:scaleX(0.9609);">Started at</div>
<div class="t" style="left:1566.30px;top:828.20px;font-size:14px;font-weight:700;color:rgba(0,0,0,0.87);transform:scaleX(0.9781);">Time</div>
<div class="t" style="left:1692.63px;top:828.20px;font-size:14px;font-weight:700;color:rgba(0,0,0,0.87);transform:scaleX(0.9667);">Diagram</div>
<div class="t" style="left:1799.00px;top:828.20px;font-size:14px;font-weight:700;color:rgba(0,0,0,0.87);transform:scaleX(0.9275);">Actions</div>
<div class="t" style="left:473.41px;top:889.10px;font-size:14px;font-weight:400;color:#1976d2;transform:scaleX(0.9893);">build-inventory-service-feature-tt-000-...</div>
<div class="t" style="left:758.00px;top:889.10px;font-size:14px;font-weight:400;color:#1976d2;transform:scaleX(0.9952);">bitbucket-go-beego-app-build-edp</div>
<div class="t" style="left:1026.49px;top:879.35px;font-size:14px;font-weight:400;color:rgba(0,0,0,0.87);transform:scaleX(1.0111);">build/0.1.0-feature-tt-000-</div>
<div class="t" style="left:1026.56px;top:899.35px;font-size:14px;font-weight:400;color:rgba(0,0,0,0.87);transform:scaleX(0.9448);">SNAPSHOT.1</div>
<div class="t" style="left:1398.00px;top:889.35px;font-size:14px;font-weight:400;color:rgba(0,0,0,0.87);transform:scaleX(0.9851);">Jan 22, 3:00 PM</div>
<div class="t" style="left:1545.80px;top:889.35px;font-size:14px;font-weight:400;color:rgba(0,0,0,0.87);transform:scaleX(1.0044);">3m 18s</div>
<div class="t" style="left:1526.42px;top:949.30px;font-size:14px;font-weight:400;color:rgba(0,0,0,0.87);transform:scaleX(0.9823);">Rows per page:</div>
<div class="t" style="left:1638.47px;top:948.10px;font-size:14px;font-weight:400;color:rgba(0,0,0,0.87);transform:scaleX(1.0286);">15</div>
<div class="t" style="left:1710.18px;top:949.30px;font-size:14px;font-weight:400;color:rgba(0,0,0,0.87);transform:scaleX(1.0245);">1–1 of 1</div>
<div class="t" style="left:70.60px;top:1076.40px;font-size:14px;font-weight:400;color:#fff;transform:scaleX(0.8892);-webkit-text-stroke:0.45px #fff;">CREATE RESOURCE</div>
<div class="t" style="left:1623.60px;top:118.55px;font-size:13px;font-weight:400;color:#596d80;transform:scaleX(0.8636);-webkit-text-stroke:0.3px #596d80;">GIT</div>
<div class="t" style="left:1701.46px;top:118.55px;font-size:13px;font-weight:400;color:#596d80;transform:scaleX(0.9378);-webkit-text-stroke:0.3px #596d80;">SONAR</div>
</body></html>
